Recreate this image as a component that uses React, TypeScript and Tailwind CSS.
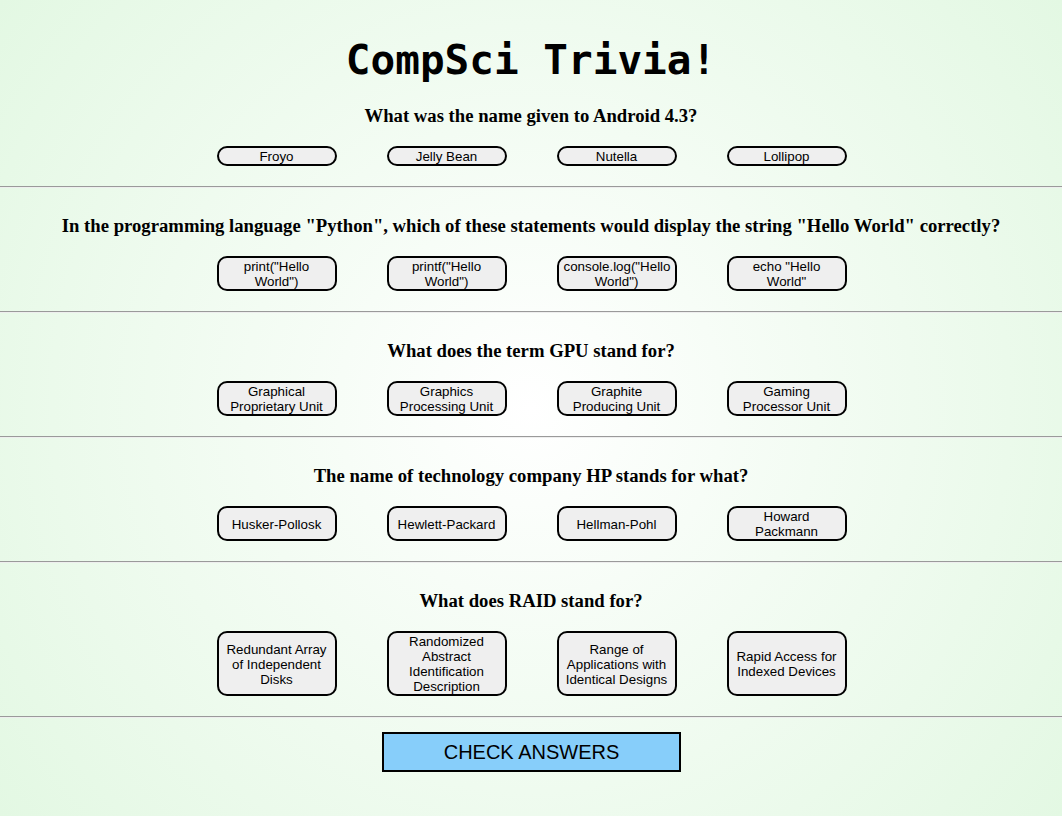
const questions = [
  {
    q: "What was the name given to Android 4.3?",
    answers: ["Froyo", "Jelly Bean", "Nutella", "Lollipop"],
  },
  {
    q: 'In the programming language "Python", which of these statements would display the string "Hello World" correctly?',
    answers: ['print("Hello World")', 'printf("Hello World")', 'console.log("Hello World")', 'echo "Hello World"'],
  },
  {
    q: "What does the term GPU stand for?",
    answers: ["Graphical Proprietary Unit", "Graphics Processing Unit", "Graphite Producing Unit", "Gaming Processor Unit"],
  },
  {
    q: "The name of technology company HP stands for what?",
    answers: ["Husker-Pollosk", "Hewlett-Packard", "Hellman-Pohl", "Howard Packmann"],
  },
  {
    q: "What does RAID stand for?",
    answers: [
      "Redundant Array of Independent Disks",
      "Randomized Abstract Identification Description",
      "Range of Applications with Identical Designs",
      "Rapid Access for Indexed Devices",
    ],
  },
];

const Divider = () => <hr className="my-2 h-0 border-t border-b border-t-[#9a9a9a] border-b-[#eeeeee]" />;

export default function App() {
  return (
    <div className="min-h-screen bg-[radial-gradient(circle,#ffffff,#e3f8e3)] text-black">
      <div className="pt-[36px] pb-6">
        <h1 className="text-center font-['DejaVu_Sans_Mono',monospace] text-[41px] font-bold leading-[48px] mb-[21px]">
          CompSci Trivia!
        </h1>
        {questions.map((item, i) => (
          <div key={i}>
            {i > 0 && <Divider />}
            <h3
              className={`text-center font-['Liberation_Serif',serif] text-[18.7px] font-bold leading-[21px] mb-[20px] ${
                i > 0 ? "mt-[27px]" : ""
              }`}
            >
              {item.q}
            </h3>
            <div className="flex justify-center mb-[20px] pl-[1px]">
              {item.answers.map((a) => (
                <button
                  key={a}
                  className="mx-[25px] w-[120px] rounded-[10px] border-2 border-black bg-[#efefef] px-[5px] pt-[1px] pb-0 font-['Liberation_Sans',Arial,sans-serif] text-[13.33px] leading-[15px]"
                >
                  {a}
                </button>
              ))}
            </div>
          </div>
        ))}
        <Divider />
        <div className="flex justify-center mt-[14px] pl-[1px]">
          <button className="w-[299px] h-[40px] border-2 border-black bg-[#87cefa] font-['Liberation_Sans',Arial,sans-serif] text-[20px]">
            CHECK ANSWERS
          </button>
        </div>
      </div>
    </div>
  );
}
